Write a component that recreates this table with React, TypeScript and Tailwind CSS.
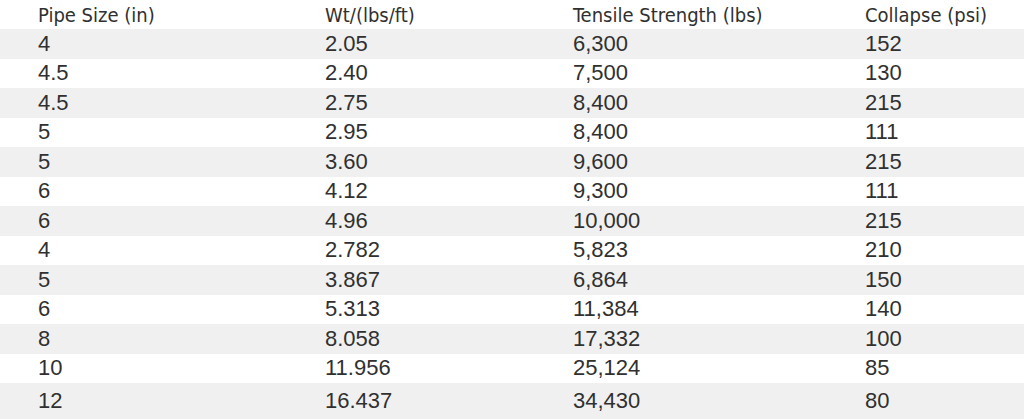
const rows: [string, string, string, string][] = [
  ["4", "2.05", "6,300", "152"],
  ["4.5", "2.40", "7,500", "130"],
  ["4.5", "2.75", "8,400", "215"],
  ["5", "2.95", "8,400", "111"],
  ["5", "3.60", "9,600", "215"],
  ["6", "4.12", "9,300", "111"],
  ["6", "4.96", "10,000", "215"],
  ["4", "2.782", "5,823", "210"],
  ["5", "3.867", "6,864", "150"],
  ["6", "5.313", "11,384", "140"],
  ["8", "8.058", "17,332", "100"],
  ["10", "11.956", "25,124", "85"],
  ["12", "16.437", "34,430", "80"],
];

const headers = ["Pipe Size (in)", "Wt/(lbs/ft)", "Tensile Strength (lbs)", "Collapse (psi)"];

const gridCols = "grid grid-cols-[287px_248px_292px_1fr] pl-[38px] items-center";

const App = () => {
  return (
    <div className="w-[1024px] h-[419px] bg-white flex flex-col text-[#303030]">
      <div
        className={gridCols + " h-[29px] text-[20px] leading-none"}
        style={{ fontFamily: '"DejaVu Sans Condensed", "Liberation Sans Narrow", sans-serif' }}
      >
        {headers.map((h) => (
          <div key={h} className="whitespace-nowrap">
            {h}
          </div>
        ))}
      </div>
      {rows.map((r, i) => (
        <div
          key={i}
          className={
            gridCols +
            " text-[22px] leading-none font-['Liberation_Sans',sans-serif] " +
            (i % 2 === 0 ? "bg-[#f0f0f0] " : "bg-white ") +
            (i === rows.length - 1 ? "flex-1" : "h-[29.5px]")
          }
        >
          {r.map((c, j) => (
            <div key={j}>{c}</div>
          ))}
        </div>
      ))}
    </div>
  );
};

export default App;
